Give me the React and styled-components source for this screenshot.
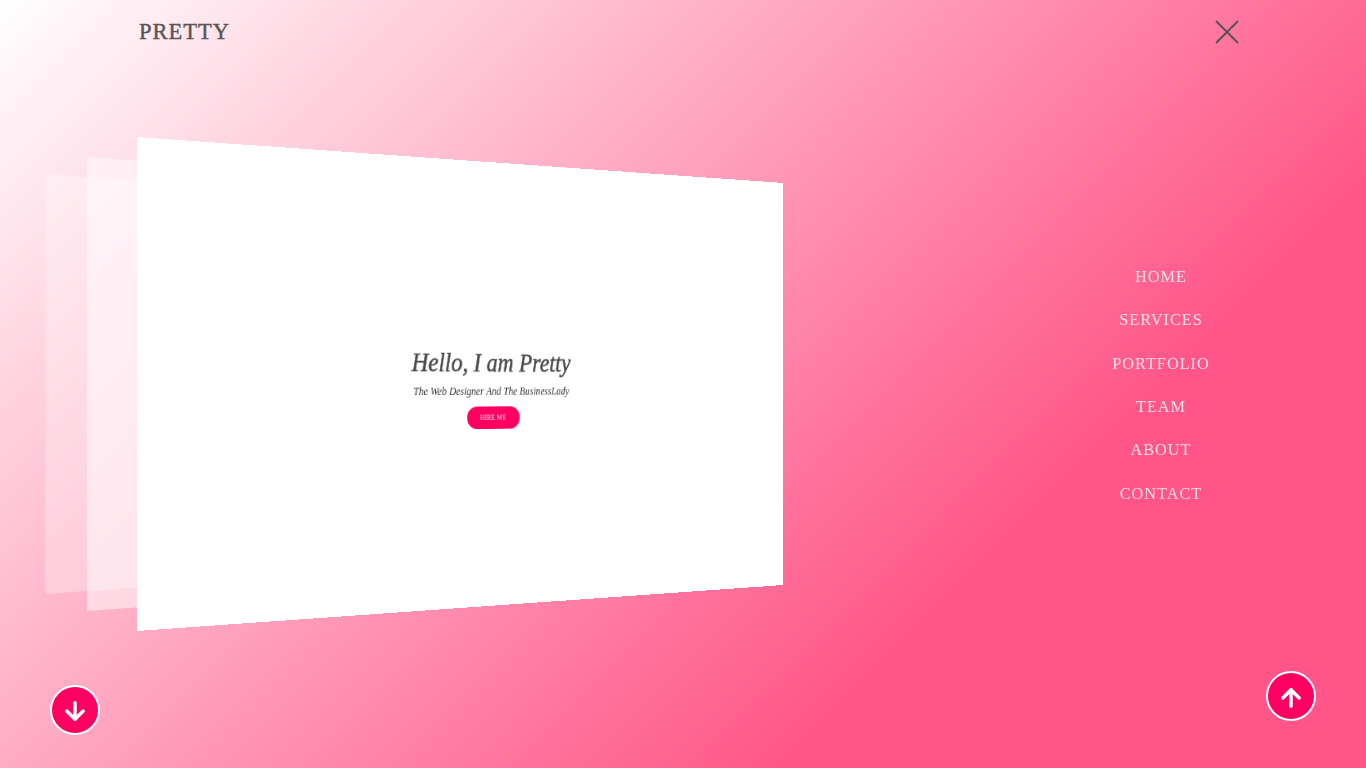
import styled, { createGlobalStyle } from 'styled-components';
import { ArrowDown, ArrowUp } from 'lucide-react';

const navItems = ['HOME', 'SERVICES', 'PORTFOLIO', 'TEAM', 'ABOUT', 'CONTACT'];

const App = () => {
  return (
    <Page>
      <GlobalStyle />
      <Slide $left={45} $scale={0.85} $alpha={0.3} />
      <Slide $left={87} $scale={0.919} $alpha={0.5} />
      <Slide $left={136.7} $scale={1} $alpha={1}>
        <Title>Hello, I am Pretty</Title>
        <Subtitle>The Web Designer And The BusinessLady</Subtitle>
        <HireButton>HIRE ME</HireButton>
      </Slide>
      <Header>
        <Logo>PRETTY</Logo>
        <CloseIcon viewBox="0 0 24 24" aria-label="close">
          <path d="M1 1 L23 23 M23 1 L1 23" />
        </CloseIcon>
      </Header>
      <Middle>
        <Nav>
          {navItems.map((item) => (
            <NavLink key={item}>{item}</NavLink>
          ))}
        </Nav>
      </Middle>
      <Footer>
        <RoundButton $drop={1}>
          <ArrowDown size={28} strokeWidth={3} />
        </RoundButton>
        <RoundButton $lift={14} $drop={3}>
          <ArrowUp size={28} strokeWidth={3} />
        </RoundButton>
      </Footer>
    </Page>
  );
};

export default App;

const GlobalStyle = createGlobalStyle`
  html, body {
    margin: 0;
    padding: 0;
    overflow: hidden;
  }
`;

const Page = styled.div`
  position: relative;
  width: 100vw;
  height: 100vh;
  overflow: hidden;
  display: grid;
  grid-template-rows: 64px 1fr 64px;
  font-family: 'Liberation Serif', serif;
  background: linear-gradient(135deg, #ffffff 0%, #ff5588 73%, #ff5588 100%);
`;

const Slide = styled.div`
  position: absolute;
  top: 137px;
  left: ${(p) => p.$left}px;
  width: 794px;
  height: 494px;
  padding-top: 8px;
  box-sizing: border-box;
  display: flex;
  flex-direction: column;
  align-items: center;
  justify-content: center;
  background: rgba(255, 255, 255, ${(p) => p.$alpha});
  transform-origin: 0 50%;
  transform: scale(${(p) => p.$scale}) matrix3d(1, 0, 0, 0.000288, 0, 1, 0, 0, 0, 0, 1, 0, 0, 0, 0, 1);
`;

const Title = styled.h1`
  margin: 0;
  font-size: 30px;
  line-height: 36px;
  font-weight: 400;
  font-style: italic;
  white-space: nowrap;
  color: #4a4a4a;
  -webkit-text-stroke: 0.5px #4a4a4a;
  transform: scaleX(0.915);
`;

const Subtitle = styled.p`
  margin: 7px 0 8px;
  font-size: 11.6px;
  line-height: 16px;
  font-style: italic;
  color: #333;
`;

const HireButton = styled.button`
  width: 65px;
  height: 25px;
  padding: 0;
  border: none;
  border-radius: 12px;
  background: #ff0060;
  color: #ffe6ee;
  font-family: inherit;
  font-size: 8px;
`;

const Header = styled.header`
  position: relative;
  display: flex;
  justify-content: space-between;
  align-items: center;
  padding: 0 127px 0 139px;
`;

const Logo = styled.div`
  font-size: 22.5px;
  letter-spacing: 1px;
  color: #555;
  -webkit-text-stroke: 0.4px #555;
`;

const CloseIcon = styled.svg`
  width: 24px;
  height: 24px;
  fill: none;
  stroke: #555;
  stroke-width: 2;
`;

const Middle = styled.div`
  position: relative;
  display: flex;
  justify-content: flex-end;
  align-items: center;
  padding: 2px 155px 0 0;
`;

const Nav = styled.nav`
  display: flex;
  flex-direction: column;
  align-items: center;
  width: 100px;
`;

const NavLink = styled.a`
  font-size: 16.3px;
  line-height: 43.4px;
  letter-spacing: 1px;
  white-space: nowrap;
  color: #ffe0ea;
`;

const Footer = styled.footer`
  position: relative;
  display: flex;
  justify-content: space-between;
  align-items: flex-end;
  padding: 0 50px 33px;
`;

const RoundButton = styled.button`
  width: 50px;
  height: 50px;
  margin-bottom: ${(p) => p.$lift || 0}px;
  padding: ${(p) => p.$drop}px 0 0;
  display: flex;
  align-items: center;
  justify-content: center;
  border: 2px solid #fff;
  border-radius: 50%;
  background: #ff0060;
  color: #fff;
`;
